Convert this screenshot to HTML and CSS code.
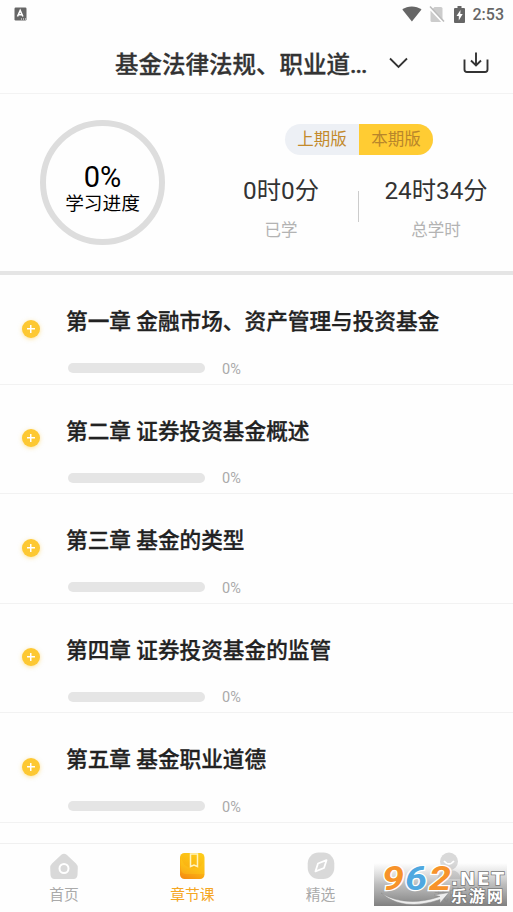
FILE: index.html
```html
<!DOCTYPE html>
<html lang="zh-CN">
<head>
    <meta charset="UTF-8">
    <meta name="viewport" content="width=device-width, initial-scale=1.0">
    <title>章节课</title>
    <link rel="stylesheet" href="styles.css">
</head>
<body>
    <div class="app">
        <div class="status-bar">
            <svg class="status-app" viewBox="0 0 13 14">
                <rect x="0.5" y="0.5" width="12" height="13" rx="1.2" fill="#666"/>
                <path d="M3.5 9.5L6.2 3.5L8.9 9.5M4.5 7.8H8" fill="none" stroke="#fff" stroke-width="1.6"/>
                <path d="M7 12h1M9 12h1M11 12h1" stroke="#fff" stroke-width="1"/>
            </svg>
            <div class="status-right">
                <svg width="20" height="16" viewBox="0 0 20 16">
                    <path d="M0.3 3.6C5.5-.7 14-.7 19.5 3.6L9.9 15.6z" fill="#666"/>
                </svg>
                <svg class="sim" width="16" height="18" viewBox="0 0 16 18">
                    <path d="M5.5 2H12q1.5 0 1.5 1.5V17H3q-1.5 0-1.5-1.5V6z" fill="#ccc"/>
                    <path d="M0 2.5L14 17.5" stroke="#fff" stroke-width="2"/>
                    <path d="M1 1.5L15 16.5" stroke="#bbb" stroke-width="1.5"/>
                </svg>
                <svg class="battery" width="11" height="17" viewBox="0 0 11 17">
                    <path d="M3.500 0h4v2H10q1 0 1 1v13q0 1-1 1H1q-1 0-1-1V3q0-1 1-1h2.500z" fill="#666"/>
                    <path d="M6.500 4L2.500 10h2.300v4.500L8.700 8H6.300z" fill="#fff"/>
                </svg>
                <span class="clock">2:53</span>
            </div>
        </div>

        <header class="header">
            <h1>基金法律法规、职业道<span class="dots">...</span></h1>
            <svg class="chevron" width="19" height="12" viewBox="0 0 19 12">
                <path d="M1 1.5L9.5 10L18 1.5" fill="none" stroke="#333" stroke-width="1.8"/>
            </svg>
            <svg class="download" width="26" height="22" viewBox="0 0 26 22">
                <path d="M1.500 7.500V17.500Q1.500 20 4 20H22Q24.500 20 24.500 17.500V7.500M13 .5V13.500M8 8.500L13 13.500L18 8.500" fill="none" stroke="#333" stroke-width="1.900"/>
            </svg>
        </header>

        <section class="summary">
            <div class="ring">
                <div class="ring-value">0%</div>
                <div class="ring-label">学习进度</div>
            </div>
            <div class="summary-info">
                <div class="switch">
                    <span class="switch-item">上期版</span>
                    <span class="switch-item active">本期版</span>
                </div>
                <div class="times">
                    <div class="time">
                        <div class="time-value">0时0分</div>
                        <div class="time-label">已学</div>
                    </div>
                    <div class="divider"></div>
                    <div class="time">
                        <div class="time-value">24时34分</div>
                        <div class="time-label">总学时</div>
                    </div>
                </div>
            </div>
        </section>

        <main class="chapters">
            <div class="chapter">
                <span class="plus"></span>
                <div class="chapter-body">
                    <h2>第一章 金融市场、资产管理与投资基金</h2>
                    <div class="progress"><span class="bar"></span><span class="percent">0%</span></div>
                </div>
            </div>
            <div class="chapter">
                <span class="plus"></span>
                <div class="chapter-body">
                    <h2>第二章 证券投资基金概述</h2>
                    <div class="progress"><span class="bar"></span><span class="percent">0%</span></div>
                </div>
            </div>
            <div class="chapter">
                <span class="plus"></span>
                <div class="chapter-body">
                    <h2>第三章 基金的类型</h2>
                    <div class="progress"><span class="bar"></span><span class="percent">0%</span></div>
                </div>
            </div>
            <div class="chapter">
                <span class="plus"></span>
                <div class="chapter-body">
                    <h2>第四章 证券投资基金的监管</h2>
                    <div class="progress"><span class="bar"></span><span class="percent">0%</span></div>
                </div>
            </div>
            <div class="chapter">
                <span class="plus"></span>
                <div class="chapter-body">
                    <h2>第五章 基金职业道德</h2>
                    <div class="progress"><span class="bar"></span><span class="percent">0%</span></div>
                </div>
            </div>
        </main>

        <nav class="tabbar">
            <a class="tab">
                <svg width="28" height="28" viewBox="0 0 28 28">
                    <path d="M11.300 2.800Q14 .700 16.700 2.800L26 11.500Q28 13.500 27.800 16L27.500 23Q27 27 23.500 27H4.500Q1 27 .5 23L.2 16Q0 13.500 2 11.500z" fill="#d9d9d9"/>
                    <circle cx="14" cy="16.500" r="4.500" fill="none" stroke="#fff" stroke-width="2"/>
                </svg>
                <span>首页</span>
            </a>
            <a class="tab active">
                <svg width="28" height="28" viewBox="0 0 28 28">
                    <defs>
                        <linearGradient id="book" x1="0.7" y1="0" x2="0.3" y2="1">
                            <stop offset="0" stop-color="#fdcb18"/>
                            <stop offset="0.6" stop-color="#fbb312"/>
                            <stop offset="1" stop-color="#f58f12"/>
                        </linearGradient>
                    </defs>
                    <rect x="2" y="1" width="24.500" height="26" rx="4.500" fill="url(#book)"/>
                    <path d="M3 3V18Q4 22 8 22H26V6Q25 18 12 16Q4 14 3 3" fill="#ffd522" opacity="0.3"/>
                    <path d="M12.500 2V14.500L16 13L19.500 14.500V2z" fill="none" stroke="#fff4bd" stroke-width="1.500"/>
                </svg>
                <span>章节课</span>
            </a>
            <a class="tab">
                <svg width="28" height="28" viewBox="0 0 28 28">
                    <rect x="0.7" y="0.5" width="26.6" height="26.5" rx="11" fill="#d9d9d9"/>
                    <path d="M8.5 19.3L11 11.5L19.500 8.200L17 16z" fill="none" stroke="#fff" stroke-width="1.8" stroke-linejoin="round"/>
                </svg>
                <span>精选</span>
            </a>
            <a class="tab">
                <svg width="28" height="28" viewBox="0 0 28 28">
                    <circle cx="14" cy="9.5" r="9" fill="#d9d9d9"/>
                    <path d="M9 9Q14 15 19 9" fill="none" stroke="#fff" stroke-width="1.8"/>
                    <path d="M2 27Q4 17 14 18.5Q24 17 26 27z" fill="#d9d9d9"/>
                </svg>
                <span>我的</span>
            </a>
        </nav>

        <!-- site badge over the last tab -->
        <svg class="watermark" width="133" height="43" viewBox="0 0 133 43">
            <defs>
                <linearGradient id="shade" x1="0" y1="0" x2="0" y2="1">
                    <stop offset="0" stop-color="#aaa" stop-opacity="0"/>
                    <stop offset="0.5" stop-color="#999" stop-opacity="0.65"/>
                    <stop offset="1" stop-color="#808080" stop-opacity="1"/>
                </linearGradient>
            </defs>
            <rect width="133" height="43" fill="url(#shade)"/>
            <path d="M7 30Q32 45 66 33.500L60 32L75 29.500L66 40L66 36.500Q29 49 7 30z" fill="#eee" stroke="#888" stroke-width="0.5"/>
            <g class="wm-number">
                <text x="8" y="27" textLength="22" lengthAdjust="spacingAndGlyphs" fill="#f7932a">9</text>
                <text x="31" y="27" textLength="22" lengthAdjust="spacingAndGlyphs" fill="#4fa8e0">6</text>
                <text x="55" y="27" textLength="22" lengthAdjust="spacingAndGlyphs" fill="#f7932a">2</text>
            </g>
            <text class="wm-net" x="77" y="21.500" textLength="53">.NET</text>
            <text class="wm-name" x="77" y="38.500" textLength="52">乐游网</text>
        </svg>
    </div>
</body>
</html>
```
FILE: styles.css
```css
* {
    margin: 0;
    padding: 0;
    box-sizing: border-box;
}

body {
    font-family: Roboto, 'Noto Sans CJK SC', sans-serif;
    background: #fff;
    color: #333;
}

svg {
    display: block;
    flex-shrink: 0;
}

.app {
    position: relative;
    width: 513px;
    height: 912px;
    overflow: hidden;
    display: flex;
    flex-direction: column;
    background: #fefefe;
}

/* Status bar */
.status-bar {
    height: 28px;
    flex-shrink: 0;
    display: flex;
    justify-content: space-between;
    align-items: center;
    padding: 0 9px 0 14px;
}

.status-app {
    width: 13px;
    height: 14px;
}

.status-right {
    display: flex;
    align-items: center;
}

.sim {
    margin-left: 7px;
}

.battery {
    margin-left: 9px;
}

.clock {
    margin-left: 8px;
    padding-top: 1px;
    font-size: 16px;
    font-weight: 500;
    line-height: 27px;
    color: #666;
}

/* Header */
.header {
    height: 66px;
    flex-shrink: 0;
    display: flex;
    align-items: center;
    padding: 4px 24px 0 115px;
    border-bottom: 1px solid #f3f3f3;
}

h1 {
    font-size: 23.5px;
    line-height: 34px;
    font-weight: 500;
    white-space: nowrap;
    width: 274px;
    margin-top: 4px;
    -webkit-text-stroke: 0.3px #333;
}

.dots {
    letter-spacing: -1px;
}

.download {
    margin-left: auto;
    margin-top: 1px;
}

/* Summary */
.summary {
    height: 181px;
    flex-shrink: 0;
    display: flex;
    padding: 26px 14px 0 40px;
    border-bottom: 4px solid #e5e5e5;
}

.ring {
    width: 125px;
    height: 125px;
    flex-shrink: 0;
    border: 6px solid #ddd;
    border-radius: 50%;
    color: #000;
    text-align: center;
    padding-top: 35px;
}

.ring-value {
    font-size: 29px;
    line-height: 32px;
}

.ring-label {
    font-size: 18.7px;
    line-height: 23px;
}

.summary-info {
    flex: 1;
    margin-left: 39px;
    padding-top: 4px;
}

.switch {
    display: flex;
    width: 148px;
    height: 31px;
    margin-left: 81px;
    border-radius: 16px;
    overflow: hidden;
    background: #edf0f5;
}

.switch-item {
    flex: 1;
    text-align: center;
    font-size: 16.5px;
    line-height: 32px;
    color: #c38a2c;
}

.switch-item.active {
    background: #ffcc33;
    color: #b8862b;
}

.times {
    display: flex;
    margin-top: 18px;
}

.time {
    width: 154px;
    text-align: center;
}

.time-value {
    font-size: 24.3px;
    line-height: 36px;
    white-space: nowrap;
}

.time-label {
    margin-top: 9px;
    font-size: 16.5px;
    line-height: 26px;
    color: #b3b3b3;
}

.divider {
    width: 1px;
    height: 31px;
    margin-top: 18px;
    flex-shrink: 0;
    background: #ccc;
}

/* Chapters */
.chapters {
    flex: 1;
    min-height: 0;
}

.chapter {
    display: flex;
    height: 109.5px;
    padding: 0 20px 0 22px;
    border-bottom: 1px solid #f2f2f2;
}

.plus {
    width: 18px;
    height: 18px;
    margin-top: 44.5px;
    flex-shrink: 0;
    border-radius: 50%;
    background:
        linear-gradient(#fff, #fff) center / 8px 1.5px no-repeat,
        linear-gradient(#fff, #fff) center / 1.5px 8px no-repeat,
        #fdc832;
    box-shadow: 0 1px 4px rgba(253, 200, 50, 0.5);
}

.chapter-body {
    margin-left: 26px;
    padding-top: 31px;
}

h2 {
    font-size: 21.65px;
    line-height: 32px;
    font-weight: 500;
    color: #222;
    white-space: nowrap;
    -webkit-text-stroke: 0.3px #222;
}

.progress {
    display: flex;
    align-items: center;
    gap: 17px;
    margin: 20px 0 0 2px;
    height: 20px;
    font-size: 14.5px;
    color: #aaa;
}

.percent {
    padding-top: 2px;
}

.bar {
    width: 137px;
    height: 10px;
    border-radius: 5px;
    background: #e5e5e5;
}

/* Tab bar */
.tabbar {
    height: 69px;
    flex-shrink: 0;
    display: flex;
    border-top: 1px solid #f0f0f0;
    background: #fefefe;
}

.tab {
    flex: 1;
    display: flex;
    flex-direction: column;
    align-items: center;
    padding-top: 8px;
    font-size: 14.8px;
    line-height: 24px;
    color: #aaa;
}

.tab span {
    margin-top: 3px;
}

.tab.active {
    color: #f5a623;
}

/* Site badge */
.watermark {
    position: absolute;
    left: 374px;
    top: 863px;
    overflow: visible;
}

.wm-number {
    font: italic bold 33px Roboto, sans-serif;
    stroke: #fff;
    stroke-width: 2.5px;
    paint-order: stroke;
}

.wm-net,
.wm-name {
    fill: #fff;
    stroke: #777;
    stroke-width: 1.5px;
    paint-order: stroke;
}

.wm-net {
    font: bold 18.5px 'DejaVu Sans', sans-serif;
}

.wm-name {
    font: bold 16px 'Noto Sans CJK SC', sans-serif;
}
```
